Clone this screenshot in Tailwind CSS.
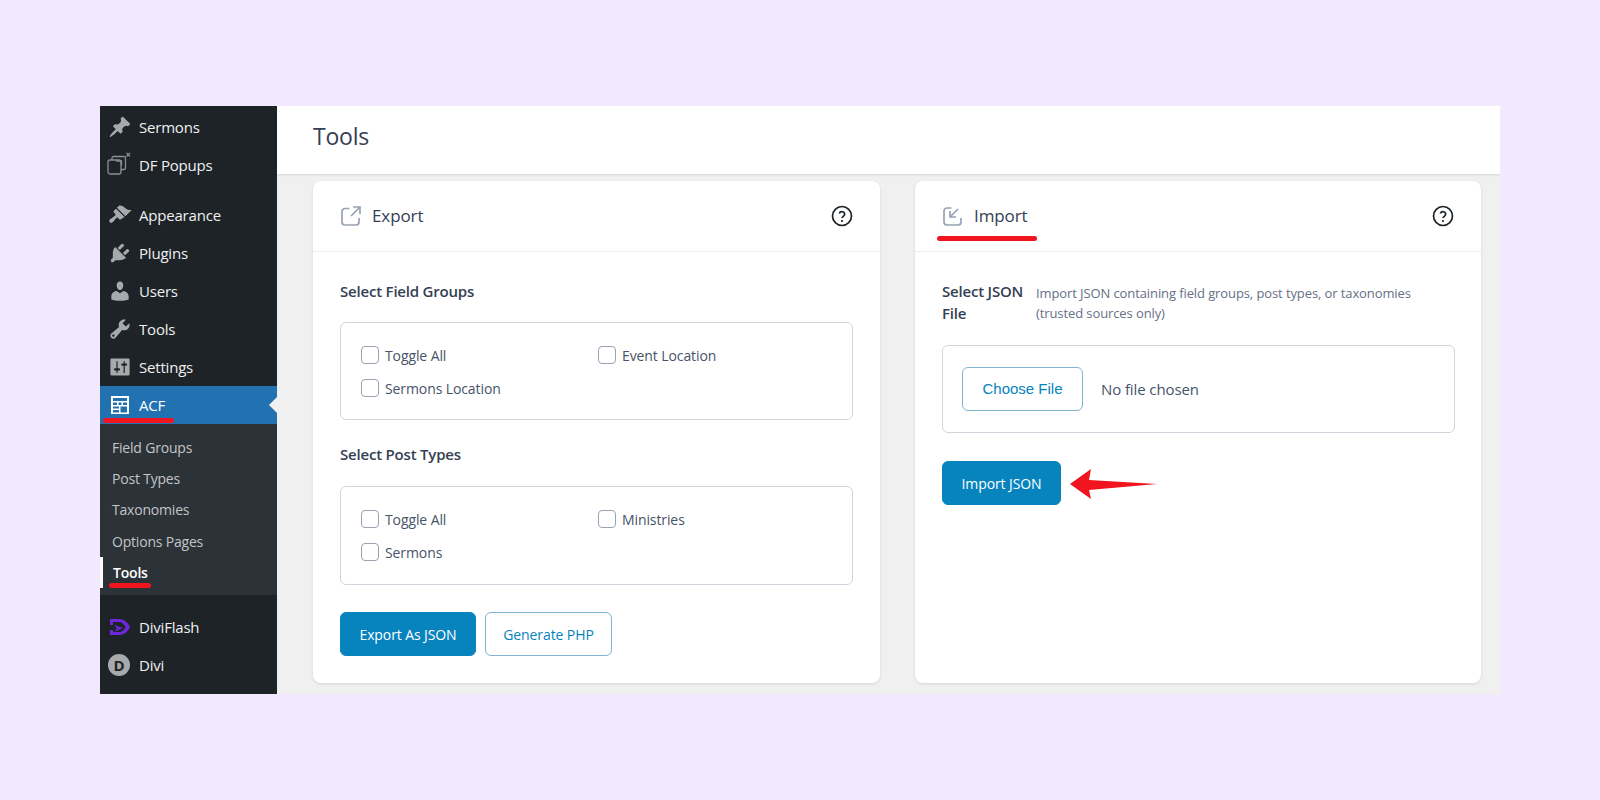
<!DOCTYPE html>
<html lang="en">

<head>
    <meta charset="UTF-8">
    <title>Tools</title>
    <script src="https://cdn.jsdelivr.net/npm/@tailwindcss/browser@4"></script>
</head>

<body class="bg-[#f3e9ff] font-['Open_Sans',sans-serif] h-[800px] overflow-hidden">
    <div class="relative mt-[106px] ml-[100px] w-[1400px] h-[588px] flex overflow-hidden">

        <!-- admin menu -->
        <aside class="w-[177px] shrink-0 bg-[#1d2327] pt-[2px] text-[15px] text-[#f0f0f1] tracking-[-0.2px]">
            <a class="h-[38px] flex items-center pl-[8px]">
                <svg class="w-[24px] h-[24px] fill-[#a7aaad]" viewBox="0 0 20 20"><path d="M10.44 3.02l1.82-1.82 6.36 6.35-1.83 1.82c-1.05-.68-2.48-.57-3.41.36l-.75.75c-.92.93-1.04 2.35-.35 3.41l-1.83 1.82-2.41-2.41-2.8 2.79c-.42.42-3.38 2.71-3.8 2.29s1.86-3.39 2.28-3.81l2.79-2.79L4.1 9.36l1.83-1.82c1.05.69 2.48.57 3.4-.36l.75-.75c.93-.92 1.05-2.35.36-3.41z"/></svg>
                <span class="ml-[7px]">Sermons</span>
            </a>
            <a class="h-[38px] flex items-center pl-[7px]">
                <svg class="w-[24px] h-[26px] fill-none stroke-[#8c8f94] stroke-[1.3]" viewBox="0 0 24 26"><rect x="1" y="8" width="13" height="14" rx="2"/><path d="M5 8V6a1.5 1.5 0 0 1 1.5-1.5H17A1.5 1.5 0 0 1 18.500 6v10a1.500 1.500 0 0 1-1.500 1.500h-3"/><path d="M9 9h5.500v4.500"/><path d="M19.500 1l3.500 3.500M23 1l-3.500 3.500"/></svg>
                <span class="ml-[8px]">DF Popups</span>
            </a>
            <a class="mt-[12px] h-[38px] flex items-center pl-[8px]">
                <svg class="w-[24px] h-[24px] fill-[#a7aaad]" viewBox="0 0 20 20"><path d="M14.48 11.060L7.410 3.990l1.500-1.500c.5-.56 2.300-.47 3.510.32 1.210.8 1.430 1.280 2.910 2.100 1.180.64 2.450 1.260 4.450.85zm-.71.71L6.700 4.700 4.930 6.470c-.39.39-.39 1.020 0 1.410l1.060 1.060c.39.39.39 1.030 0 1.420-.6.6-1.430 1.110-2.210 1.690-.35.26-.7.53-1.010.84C1.430 13.230.4 14.890 1.700 16.200c.77.77 1.830.29 2.660-.53.32-.32.59-.67.85-1.010.58-.78 1.090-1.610 1.690-2.210.39-.39 1.030-.39 1.420 0l1.060 1.060c.39.39 1.020.39 1.410 0z"/></svg>
                <span class="ml-[7px]">Appearance</span>
            </a>
            <a class="h-[38px] flex items-center pl-[8px]">
                <svg class="w-[24px] h-[24px] fill-[#a7aaad]" viewBox="0 0 20 20"><path d="M13.110 4.360L9.870 7.600 8 5.730l3.240-3.240c.35-.34 1.050-.2 1.560.32.52.51.66 1.210.31 1.550zm-8 1.770l.91-1.120 9.010 9.010-1.190.84c-.71.71-2.630 1.160-3.820 1.160H6.140L4.900 17.260c-.59.59-1.540.59-2.120 0-.59-.58-.59-1.530 0-2.120l1.240-1.240v-3.880c0-1.130.4-3.190 1.090-3.890zm7.260 3.970l3.240-3.240c.34-.35 1.040-.21 1.550.31.52.51.66 1.210.31 1.550l-3.240 3.250z"/></svg>
                <span class="ml-[7px]">Plugins</span>
            </a>
            <a class="h-[38px] flex items-center pl-[8px]">
                <svg class="w-[24px] h-[24px] fill-[#a7aaad]" viewBox="0 0 20 20"><path d="M10 9.250c-2.270 0-2.730-3.440-2.730-3.440C7 4.020 7.820 2 9.970 2c2.160 0 2.980 2.020 2.710 3.810 0 0-.41 3.440-2.680 3.440zm0 2.570L12.720 10c2.390 0 4.520 2.330 4.520 4.530v2.490s-3.650 1.130-7.240 1.130c-3.650 0-7.240-1.130-7.240-1.130v-2.490c0-2.250 1.940-4.480 4.470-4.480z"/></svg>
                <span class="ml-[7px]">Users</span>
            </a>
            <a class="h-[38px] flex items-center pl-[8px]">
                <svg class="w-[24px] h-[24px] fill-[#a7aaad]" viewBox="0 0 20 20"><path d="M16.680 9.770c-1.340 1.340-3.300 1.670-4.950.99l-5.410 6.520c-.99.99-2.590.99-3.580 0s-.99-2.590 0-3.570l6.520-5.420c-.68-1.650-.35-3.610.99-4.950 1.280-1.280 3.120-1.620 4.720-1.060l-2.890 2.890 2.820 2.820 2.860-2.870c.53 1.580.18 3.390-1.080 4.650zM3.810 16.210c.4.39 1.040.39 1.430 0 .4-.4.4-1.040 0-1.430-.39-.4-1.030-.4-1.430 0-.39.39-.39 1.030 0 1.430z"/></svg>
                <span class="ml-[7px]">Tools</span>
            </a>
            <a class="h-[38px] flex items-center pl-[8px]">
                <svg class="w-[24px] h-[24px] fill-[#a7aaad]" viewBox="0 0 20 20"><path d="M18 16V4c0-.55-.45-1-1-1H3c-.55 0-1 .45-1 1v12c0 .55.45 1 1 1h14c.55 0 1-.45 1-1zM8 11h1c.55 0 1 .45 1 1s-.45 1-1 1H8v1.500c0 .28-.22.5-.5.5s-.5-.22-.5-.5V13H6c-.55 0-1-.45-1-1s.45-1 1-1h1V5.500c0-.28.22-.5.5-.5s.5.22.5.5V11zm5-2h-1c-.55 0-1-.45-1-1s.45-1 1-1h1V5.500c0-.28.22-.5.5-.5s.5.22.5.5V7h1c.55 0 1 .45 1 1s-.45 1-1 1h-1v5.500c0 .28-.22.5-.5.5s-.5-.22-.5-.5V9z"/></svg>
                <span class="ml-[7px]">Settings</span>
            </a>
            <a class="relative h-[38px] flex items-center pl-[10px] bg-[#2271b1] text-white">
                <svg class="w-[20px] h-[20px]" viewBox="0 0 20 20"><path class="fill-white" fill-rule="evenodd" d="M1 1h18v18H1zM3 3v3h14V3zM3 7.500v2.500h4V7.500zM8.500 7.500v2.500h3V7.500zM13 7.500v2.500h4V7.500zM3 11.500v2h6v-2zM3 15v2.500h6V15zM10.500 11.500v6H17v-6z"/><rect class="fill-[#2271b1]" x="12.500" y="14" width="3" height="1.500"/></svg>
                <span class="ml-[9px]">ACF</span>
                <span class="absolute right-0 top-[11px] w-0 h-0 border-y-[8px] border-y-transparent border-r-[8px] border-r-[#f0f0f1]"></span>
            </a>
            <div class="relative h-[171px] bg-[#2c3338] pt-[7.500px] text-[14px] text-[#c3c4c7]">
                <a class="h-[31.400px] flex items-center pl-[12px]">Field Groups</a>
                <a class="h-[31.400px] flex items-center pl-[12px]">Post Types</a>
                <a class="h-[31.400px] flex items-center pl-[12px]">Taxonomies</a>
                <a class="h-[31.400px] flex items-center pl-[12px]">Options Pages</a>
                <a class="h-[31.400px] flex items-center pl-[13px] border-l-[3px] border-white -ml-0 font-semibold text-white !pl-[10px]">Tools</a>
            </div>
            <a class="mt-[13px] h-[38px] flex items-center pl-[8px]">
                <svg class="w-[24px] h-[24px]" viewBox="0 0 24 24"><path class="fill-[#6d28d9]" fill-rule="evenodd" d="M2 4h9c6 0 9 4 11 8-2 4-5 8-11 8H2v-5h3v2h6c3 0 5-2 6.500-5C16 9 14 7 11 7H5v3H2zM6 10l9 3-9 4 3-3.500z"/></svg>
                <span class="ml-[7px]">DiviFlash</span>
            </a>
            <a class="h-[38px] flex items-center pl-[8px]">
                <span class="w-[22px] h-[22px] rounded-full bg-[#a7aaad] flex items-center justify-center text-[#1d2327] text-[15px] font-bold tracking-normal">D</span>
                <span class="ml-[9px]">Divi</span>
            </a>
        </aside>

        <div class="flex-1 bg-[#f0f0f1] flex flex-col">
            <header class="h-[68px] bg-white shadow-[0_1px_2px_rgba(0,0,0,0.12)] flex items-center pl-[36px] pb-[8px]">
                <h1 class="text-[23px] text-[#344054] tracking-[-0.2px]">Tools</h1>
            </header>

            <main class="pt-[7px] pl-[36px] grid grid-cols-[567px_566px] gap-x-[35px]">
                <!-- export card -->
                <section class="h-[502px] bg-white rounded-[8px] shadow-[0_1px_3px_rgba(16,24,40,0.12)]">
                    <div class="h-[71px] border-b border-[#eaecf0] flex items-center pl-[28px] pr-[27px]">
                        <svg class="w-[20px] h-[20px] fill-none stroke-[#98a2b3] stroke-[1.700]" viewBox="0 0 20 20"><path d="M8.500 2.500H4A3 3 0 0 0 1 5.500v10.500a3 3 0 0 0 3 3h11a3 3 0 0 0 3-3v-4"/><path d="M12 1h7v7M19 1l-9 9"/></svg>
                        <h2 class="ml-[11px] text-[17px] text-[#344054] tracking-[-0.1px]">Export</h2>
                        <svg class="ml-auto w-[22px] h-[22px] fill-none stroke-[#1d2327] stroke-[1.700]" viewBox="0 0 22 22"><circle cx="11" cy="11" r="9.500"/><path d="M8.300 8.500a2.800 2.800 0 0 1 5.400.8c0 1.800-2.700 2.200-2.700 3.800"/><circle class="fill-[#1d2327] stroke-0" cx="11" cy="16" r="1.100"/></svg>
                    </div>
                    <div class="pl-[27px] pr-[27px]">
                        <h3 class="mt-[28px] text-[15px] leading-[22px] font-semibold text-[#344054] tracking-[-0.2px]">Select Field Groups</h3>
                        <div class="mt-[20px] h-[98px] border border-[#d0d5dd] rounded-[6px] pl-[20px] pt-[23px] grid grid-cols-[237px_1fr] auto-rows-[18px] gap-y-[15px] text-[14px] text-[#475467] tracking-[-0.1px]">
                            <label class="flex items-center"><span class="w-[18px] h-[18px] border border-[#98a2b3] rounded-[4px]"></span><span class="ml-[6px]">Toggle All</span></label>
                            <label class="flex items-center"><span class="w-[18px] h-[18px] border border-[#98a2b3] rounded-[4px]"></span><span class="ml-[6px]">Event Location</span></label>
                            <label class="flex items-center"><span class="w-[18px] h-[18px] border border-[#98a2b3] rounded-[4px]"></span><span class="ml-[6px]">Sermons Location</span></label>
                        </div>
                        <h3 class="mt-[23px] text-[15px] leading-[22px] font-semibold text-[#344054] tracking-[-0.2px]">Select Post Types</h3>
                        <div class="mt-[21px] h-[99px] border border-[#d0d5dd] rounded-[6px] pl-[20px] pt-[23px] grid grid-cols-[237px_1fr] auto-rows-[18px] gap-y-[15px] text-[14px] text-[#475467] tracking-[-0.1px]">
                            <label class="flex items-center"><span class="w-[18px] h-[18px] border border-[#98a2b3] rounded-[4px]"></span><span class="ml-[6px]">Toggle All</span></label>
                            <label class="flex items-center"><span class="w-[18px] h-[18px] border border-[#98a2b3] rounded-[4px]"></span><span class="ml-[6px]">Ministries</span></label>
                            <label class="flex items-center"><span class="w-[18px] h-[18px] border border-[#98a2b3] rounded-[4px]"></span><span class="ml-[6px]">Sermons</span></label>
                        </div>
                        <div class="mt-[27px] flex gap-[9px] text-[14px] tracking-[-0.1px]">
                            <button class="w-[136px] h-[44px] bg-[#0783be] border border-[#0783be] rounded-[6px] text-white">Export As JSON</button>
                            <button class="w-[127px] h-[44px] bg-white border border-[#7fb5d0] rounded-[6px] text-[#0783be]">Generate PHP</button>
                        </div>
                    </div>
                </section>

                <!-- import card -->
                <section class="relative h-[502px] bg-white rounded-[8px] shadow-[0_1px_3px_rgba(16,24,40,0.12)]">
                    <div class="h-[71px] border-b border-[#eaecf0] flex items-center pl-[28px] pr-[27px]">
                        <svg class="w-[20px] h-[20px] fill-none stroke-[#98a2b3] stroke-[1.700]" viewBox="0 0 20 20"><path d="M8.500 2H4A3 3 0 0 0 1 5v11a3 3 0 0 0 3 3h11a3 3 0 0 0 3-3v-4"/><path d="M15 3l-8 8M7 5v6h6"/></svg>
                        <h2 class="ml-[11px] text-[17px] text-[#344054] tracking-[-0.1px]">Import</h2>
                        <svg class="ml-auto w-[22px] h-[22px] fill-none stroke-[#1d2327] stroke-[1.700]" viewBox="0 0 22 22"><circle cx="11" cy="11" r="9.500"/><path d="M8.300 8.500a2.800 2.800 0 0 1 5.400.8c0 1.800-2.700 2.200-2.700 3.800"/><circle class="fill-[#1d2327] stroke-0" cx="11" cy="16" r="1.100"/></svg>
                    </div>
                    <div class="pl-[27px] pr-[26px]">
                        <div class="mt-[28px] flex">
                            <h3 class="w-[94px] shrink-0 text-[15px] leading-[22px] font-semibold text-[#344054] tracking-[-0.2px]">Select JSON File</h3>
                            <p class="pt-[3px] text-[13px] leading-[20px] text-[#667085] tracking-[-0.1px]">Import JSON containing field groups, post types, or taxonomies<br>(trusted sources only)</p>
                        </div>
                        <div class="mt-[21px] h-[88px] border border-[#d0d5dd] rounded-[6px] pl-[19px] flex items-center">
                            <button class="w-[121px] h-[44px] bg-white border border-[#7fb5d0] rounded-[6px] text-[#0783be] text-[15px] font-['Liberation_Sans',sans-serif]">Choose File</button>
                            <span class="ml-[18px] text-[15px] text-[#475467] tracking-[-0.1px]">No file chosen</span>
                        </div>
                        <button class="mt-[28px] w-[119px] h-[44px] bg-[#0783be] border border-[#0783be] rounded-[6px] text-white text-[14px] tracking-[-0.1px]">Import JSON</button>
                    </div>
                    <!-- red annotations -->
                    <span class="absolute left-[22px] top-[55px] w-[100px] h-[5px] rounded-full bg-[#f0151f]"></span>
                    <svg class="absolute left-[154px] top-[287px] w-[90px] h-[32px]" viewBox="0 0 90 32"><path fill="#f0151f" d="M1 16 L22 1 L20 12 L88 16 L20 22 L22 31 Z"/></svg>
                </section>
            </main>
        </div>

        <!-- red underlines in the menu -->
        <span class="absolute left-[3px] top-[312px] w-[71px] h-[5px] rounded-full bg-[#f0151f]"></span>
        <span class="absolute left-[9px] top-[477px] w-[42px] h-[5px] rounded-full bg-[#f0151f]"></span>
    </div>
</body>

</html>
